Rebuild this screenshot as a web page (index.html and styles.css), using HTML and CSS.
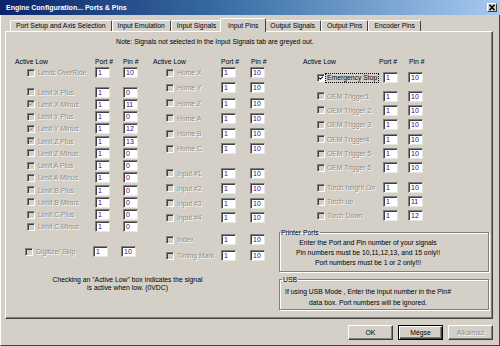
FILE: index.html
```html
<!DOCTYPE html>
<html>
<head>
<meta charset="utf-8">
<link rel="stylesheet" href="styles.css">
</head>
<body>
<div class="win">
  <div class="titlebar">
    <span class="title">Engine Configuration... Ports &amp; Pins</span>
    <span class="close"><svg width="8" height="7" viewBox="0 0 8 7"><path d="M1.5 0.8 L6.5 6.2 M6.5 0.8 L1.5 6.2" stroke="#000" stroke-width="1.6"/></svg></span>
  </div>
  <div class="tabs">
    <div class="tab">Port Setup and Axis Selection</div>
    <div class="tab">Input Emulation</div>
    <div class="tab">Input Signals</div>
    <div class="tab sel">Input Pins</div>
    <div class="tab">Output Signals</div>
    <div class="tab">Output Pins</div>
    <div class="tab">Encoder Pins</div>
  </div>
  <div class="panel">
    <div class="note">Note: Signals not selected in the Input Signals tab are greyed out.</div>
    <div class="content">
      <div class="left">
        <div class="cols">
          <div class="col c1">
            <div class="hdr"><span>Active Low</span><span>Port #</span><span>Pin #</span></div>
            <div class="row"><span class="cb"></span><span class="lbl">Limits OverRide</span><span class="fld">1</span><span class="fld">10</span></div>
            <div class="grp g-limits">
              <div class="row"><span class="cb"></span><span class="lbl">Limit X Plus</span><span class="fld">1</span><span class="fld">0</span></div>
              <div class="row"><span class="cb on"><svg viewBox="0 0 8 8"><path d="M1.6 3.8 L3.2 5.4 L6.4 2.1" fill="none" stroke="#808080" stroke-width="1.3"/></svg></span><span class="lbl">Limit X Minus</span><span class="fld">1</span><span class="fld">11</span></div>
              <div class="row"><span class="cb"></span><span class="lbl">Limit Y Plus</span><span class="fld">1</span><span class="fld">0</span></div>
              <div class="row"><span class="cb on"><svg viewBox="0 0 8 8"><path d="M1.6 3.8 L3.2 5.4 L6.4 2.1" fill="none" stroke="#808080" stroke-width="1.3"/></svg></span><span class="lbl">Limit Y Minus</span><span class="fld">1</span><span class="fld">12</span></div>
              <div class="row"><span class="cb on"><svg viewBox="0 0 8 8"><path d="M1.6 3.8 L3.2 5.4 L6.4 2.1" fill="none" stroke="#808080" stroke-width="1.3"/></svg></span><span class="lbl">Limit Z Plus</span><span class="fld">1</span><span class="fld">13</span></div>
              <div class="row"><span class="cb"></span><span class="lbl">Limit Z Minus</span><span class="fld">1</span><span class="fld">0</span></div>
              <div class="row"><span class="cb"></span><span class="lbl">Limit A Plus</span><span class="fld">1</span><span class="fld">0</span></div>
              <div class="row"><span class="cb"></span><span class="lbl">Limit A Minus</span><span class="fld">1</span><span class="fld">0</span></div>
              <div class="row"><span class="cb"></span><span class="lbl">Limit B Plus</span><span class="fld">1</span><span class="fld">0</span></div>
              <div class="row"><span class="cb"></span><span class="lbl">Limit B Minus</span><span class="fld">1</span><span class="fld">0</span></div>
              <div class="row"><span class="cb"></span><span class="lbl">Limit C Plus</span><span class="fld">1</span><span class="fld">0</span></div>
              <div class="row"><span class="cb"></span><span class="lbl">Limit C Minus</span><span class="fld">1</span><span class="fld">0</span></div>
            </div>
            <div class="row digit"><span class="cb"></span><span class="lbl">Digitize/ Skip</span><span class="fld">1</span><span class="fld">10</span></div>
          </div>
          <div class="col c2">
            <div class="hdr"><span>Active Low</span><span>Port #</span><span>Pin #</span></div>
            <div class="grp g-home">
              <div class="row"><span class="cb"></span><span class="lbl">Home X</span><span class="fld">1</span><span class="fld">10</span></div>
              <div class="row"><span class="cb"></span><span class="lbl">Home Y</span><span class="fld">1</span><span class="fld">10</span></div>
              <div class="row"><span class="cb"></span><span class="lbl">Home Z</span><span class="fld">1</span><span class="fld">10</span></div>
              <div class="row"><span class="cb"></span><span class="lbl">Home A</span><span class="fld">1</span><span class="fld">10</span></div>
              <div class="row"><span class="cb"></span><span class="lbl">Home B</span><span class="fld">1</span><span class="fld">10</span></div>
              <div class="row"><span class="cb"></span><span class="lbl">Home C</span><span class="fld">1</span><span class="fld">10</span></div>
            </div>
            <div class="grp g-inputs">
              <div class="row"><span class="cb"></span><span class="lbl">Input #1</span><span class="fld">1</span><span class="fld">10</span></div>
              <div class="row"><span class="cb"></span><span class="lbl">Input #2</span><span class="fld">1</span><span class="fld">10</span></div>
              <div class="row"><span class="cb"></span><span class="lbl">Input #3</span><span class="fld">1</span><span class="fld">10</span></div>
              <div class="row"><span class="cb"></span><span class="lbl">Input #4</span><span class="fld">1</span><span class="fld">10</span></div>
            </div>
            <div class="grp g-index">
              <div class="row"><span class="cb"></span><span class="lbl">Index</span><span class="fld">1</span><span class="fld">10</span></div>
              <div class="row"><span class="cb"></span><span class="lbl">Timing Mark</span><span class="fld">1</span><span class="fld">10</span></div>
            </div>
          </div>
        </div>
        <div class="hint">Checking an "Active Low" box indicates the signal<br>is active when low. (0VDC)</div>
      </div>
      <div class="right">
        <div class="col c3">
          <div class="hdr"><span>Active Low</span><span>Port #</span><span>Pin #</span></div>
          <div class="row estop"><span class="cb en"><svg viewBox="0 0 8 8"><path d="M1.6 3.8 L3.2 5.4 L6.4 2.1" fill="none" stroke="#000" stroke-width="1.4"/></svg></span><span class="lbl act"><span class="focus">Emergency Stop</span></span><span class="fld">1</span><span class="fld">10</span></div>
          <div class="grp g-trig">
            <div class="row"><span class="cb"></span><span class="lbl">OEM Trigger1</span><span class="fld">1</span><span class="fld">10</span></div>
            <div class="row"><span class="cb"></span><span class="lbl">OEM Trigger 2</span><span class="fld">1</span><span class="fld">10</span></div>
            <div class="row"><span class="cb"></span><span class="lbl">OEM Trigger 3</span><span class="fld">1</span><span class="fld">10</span></div>
            <div class="row"><span class="cb"></span><span class="lbl">OEM Trigger4</span><span class="fld">1</span><span class="fld">10</span></div>
            <div class="row"><span class="cb"></span><span class="lbl">OEM Trigger 5</span><span class="fld">1</span><span class="fld">10</span></div>
            <div class="row"><span class="cb"></span><span class="lbl">OEM Trigger 5</span><span class="fld">1</span><span class="fld">10</span></div>
          </div>
          <div class="grp g-torch">
            <div class="row"><span class="cb"></span><span class="lbl">Torch height On</span><span class="fld">1</span><span class="fld">10</span></div>
            <div class="row"><span class="cb"></span><span class="lbl">Torch up</span><span class="fld">1</span><span class="fld">11</span></div>
            <div class="row"><span class="cb"></span><span class="lbl">Torch Down</span><span class="fld">1</span><span class="fld">12</span></div>
          </div>
        </div>
        <fieldset class="box printer">
          <legend>Printer Ports</legend>
          <div class="boxtext">Enter the Port and Pin number of your signals<br>Pin numbers must be 10,11,12,13, and 15 only!!<br>Port numbers must be 1 or 2 only!!!</div>
        </fieldset>
        <fieldset class="box usb">
          <legend>USB</legend>
          <div class="boxtext">If using USB Mode , Enter the Input number in the Pin#<br>data box. Port numbers will be ignored.</div>
        </fieldset>
      </div>
    </div>
  </div>
  <div class="buttons">
    <div class="btn">OK</div>
    <div class="btn def">Mégse</div>
    <div class="btn dis">Alkalmaz</div>
  </div>
</div>
</body>
</html>
```
FILE: styles.css
```css
* { box-sizing: border-box; }
html, body { margin: 0; padding: 0; }
body {
  width: 500px;
  height: 346px;
  overflow: hidden;
  background: #d4d0c8;
  font-family: "Liberation Sans", Arial, sans-serif;
  font-size: 6.8px;
  color: #000;
}
.win {
  width: 500px;
  height: 346px;
  background: #d4d0c8;
  border-left: 1px solid #fff;
  border-right: 1px solid #404040;
  border-bottom: 1px solid #404040;
  display: flex;
  flex-direction: column;
}
.titlebar {
  height: 15px;
  margin-left: -1px;
  margin-right: -1px;
  display: flex;
  align-items: center;
  padding-left: 6px;
  background: linear-gradient(to right, #0a246a 0%, #3a6ea5 45%, #a6caf0 100%);
  color: #fff;
  font-weight: bold;
  font-size: 7px;
}
.close {
  margin-left: auto;
  margin-right: 3px;
  width: 10px;
  height: 9px;
  background: #d4d0c8;
  border-top: 1px solid #fff;
  border-left: 1px solid #fff;
  border-right: 1px solid #404040;
  border-bottom: 1px solid #404040;
  display: flex;
  align-items: center;
  justify-content: center;
}
.close svg { display: block; }
.tabs {
  height: 16px;
  padding-left: 9px;
  display: flex;
  align-items: flex-end;
}
.tab {
  height: 11px;
  line-height: 10px;
  padding: 0 5px;
  border-top: 1px solid #fff;
  border-left: 1px solid #fff;
  border-right: 1px solid #404040;
  border-radius: 2px 2px 0 0;
  white-space: nowrap;
  background: #d4d0c8;
}
.tab.sel {
  height: 14px;
  margin: 0 -2px -1px -2px;
  padding: 2px 7px 0 7px;
  position: relative;
  z-index: 1;
}
.panel {
  margin-left: 4px;
  width: 488px;
  height: 288px;
  border-top: 1px solid #fff;
  border-left: 1px solid #fff;
  border-right: 1px solid #404040;
  border-bottom: 1px solid #404040;
  box-shadow: inset -1px -1px 0 #808080;
  display: flex;
  flex-direction: column;
}
.note {
  margin-top: 5px;
  line-height: 10px;
  padding-left: 110px;
  white-space: nowrap;
}
.content {
  margin-top: 10px;
  padding-left: 9px;
  display: flex;
}
.left {
  width: 264px;
  display: flex;
  flex-direction: column;
}
.cols { display: flex; }
.c1 { width: 138px; }
.c2 { width: 126px; }
.right {
  width: 213px;
  display: flex;
  flex-direction: column;
}
.c3 { margin-left: 24px; }
.col { display: flex; flex-direction: column; }
.hdr {
  display: grid;
  height: 10px;
  line-height: 10px;
  white-space: nowrap;
}
.c1 .hdr { grid-template-columns: 80px 28px auto; }
.c2 .hdr { grid-template-columns: 68px 30px auto; }
.c3 .hdr { grid-template-columns: 76px 30px auto; }
.row {
  display: grid;
  height: 11px;
  align-items: center;
  white-space: nowrap;
}
.c1 .row { padding-left: 12px; grid-template-columns: 11px 57px 28px 15px; }
.c1 .row.digit { padding-left: 10px; margin-top: 14px; }
.c2 .row { padding-left: 13px; grid-template-columns: 11px 44px 29px 15px; }
.c3 .row { padding-left: 14px; grid-template-columns: 10px 56px 25px 15px; }
.grp { display: flex; flex-direction: column; }
.g-limits { margin-top: 8.5px; gap: 1.27px; }
.g-home { gap: 4.3px; }
.g-inputs { margin-top: 13.5px; gap: 3.83px; }
.g-index { margin-top: 11px; gap: 5px; }
.row.estop { margin-top: 5px; }
.g-trig { margin-top: 7.5px; gap: 3.4px; }
.g-torch { margin-top: 9px; gap: 3px; }
.cb {
  width: 8px;
  height: 8px;
  background: #d4d0c8;
  border-top: 1px solid #808080;
  border-left: 1px solid #808080;
  border-right: 1px solid #fff;
  border-bottom: 1px solid #fff;
  box-shadow: inset 1px 1px 0 #404040;
  display: block;
}
.cb svg { display: block; width: 6px; height: 6px; margin: 0 0 0 0; }
.cb.en { background: #fff; }
.lbl {
  color: #8e8b86;
  text-shadow: 0.8px 0.8px 0 #fff;
  line-height: 9px;
}
.lbl.act { color: #000; text-shadow: none; }
.focus {
  display: inline-block;
  border: 1px dotted #000;
  padding: 0 1px;
  line-height: 8px;
  margin-left: -2px;
}
.fld {
  width: 15px;
  height: 11px;
  background: #fff;
  border-top: 1px solid #808080;
  border-left: 1px solid #808080;
  border-right: 1px solid #e8e6e0;
  border-bottom: 1px solid #e8e6e0;
  box-shadow: inset 1px 1px 0 #404040;
  color: #400080;
  font-size: 7px;
  line-height: 9px;
  padding-left: 2px;
}
.hint {
  margin-top: 14.5px;
  width: 225px;
  line-height: 8px;
  text-align: center;
  white-space: nowrap;
}
.box {
  margin: 0;
  padding: 0;
  width: 210px;
  min-width: 0;
  border: 1px solid #808080;
  box-shadow: inset 1px 1px 0 #fff, 1px 1px 0 #fff;
}
.box legend {
  padding: 0 1px;
  margin-left: 0;
  line-height: 8px;
  font-size: 6.8px;
}
.box.usb legend { margin-left: 2px; }
.printer { margin-top: 7.5px; padding: 1px 32px 3px 0; }
.printer .boxtext { line-height: 10px; }
.usb { margin-top: 4px; padding: 2.5px 32px 0.5px 0; }
.usb .boxtext { line-height: 11px; }
.boxtext { text-align: center; white-space: nowrap; }
.buttons {
  margin-top: 6px;
  padding-right: 6px;
  display: flex;
  justify-content: flex-end;
  gap: 5px;
}
.btn {
  width: 45px;
  height: 15px;
  line-height: 13px;
  text-align: center;
  border-top: 1px solid #fff;
  border-left: 1px solid #fff;
  border-right: 1px solid #404040;
  border-bottom: 1px solid #404040;
  box-shadow: inset -1px -1px 0 #808080;
}
.btn.def {
  border: 1px solid #000;
  box-shadow: inset 1px 1px 0 #fff, inset -1px -1px 0 #404040, inset -2px -2px 0 #808080;
}
.btn.dis { color: #8e8b86; text-shadow: 0.8px 0.8px 0 #fff; }
```
